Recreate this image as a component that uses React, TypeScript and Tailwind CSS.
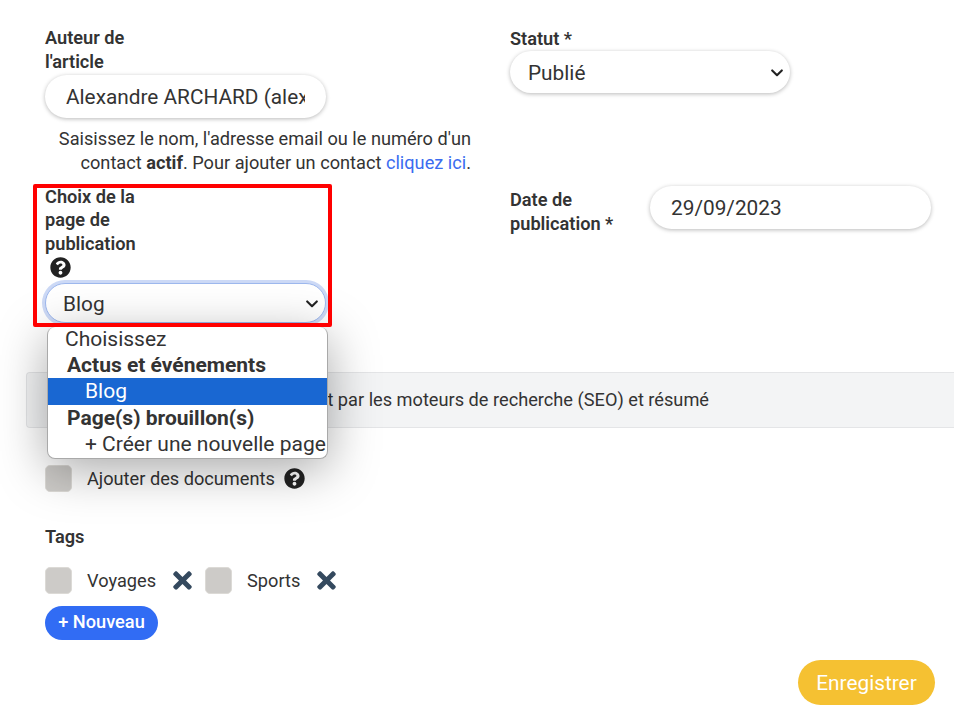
import { FaQuestionCircle, FaTimes } from "react-icons/fa";

function Check({ tone }: { tone: string }) {
  return <span className={`block w-[27px] h-[27px] rounded-[5px] border border-[#dcdad6] shrink-0 ${tone}`} />;
}

function Chevron({ right, top }: { right: string; top: string }) {
  return (
    <svg viewBox="0 0 12 8" className={`absolute w-[12px] h-[8px] pointer-events-none ${right} ${top}`} fill="none" stroke="#222" strokeWidth="2.1" strokeLinecap="round" strokeLinejoin="round">
      <path d="M1.2 1.4 6 6.2l4.8-4.8" />
    </svg>
  );
}

export default function App() {
  return (
    <div className="relative w-[954px] h-[715px] overflow-hidden bg-white text-[#333] font-['Roboto',sans-serif] text-[18.2px]">
      <div className="pt-[26px] grid grid-cols-[465px_1fr] pl-[45px]">
        <div>
          <label className="block w-[110px] font-semibold leading-[23.5px]">Auteur de l'article</label>
          <input
            readOnly
            value="Alexandre ARCHARD (alexandre.archard@example.com)"
            className="mt-[2px] block w-[281px] h-[43px] rounded-full bg-white px-[21px] text-[20.8px] text-[#333] outline-none shadow-[0_1px_4px_rgba(0,0,0,0.28)]"
          />
          <p className="mt-[9px] w-[426px] text-right leading-6">
            Saisissez le nom, l'adresse email ou le numéro d'un contact <b className="font-bold">actif</b>. Pour ajouter un contact <span className="text-[#3b6cf0]">cliquez ici</span>.
          </p>
        </div>
        <div>
          <label className="block font-semibold leading-6 pt-[1px]">Statut *</label>
          <div className="relative w-[280px]">
            <select className="block appearance-none w-[280px] h-[42px] rounded-full bg-white pl-[18px] pr-[30px] pt-[3px] text-[20.8px] text-[#333] outline-none shadow-[0_1px_4px_rgba(0,0,0,0.28)]">
              <option>Publié</option>
            </select>
            <Chevron right="right-[7px]" top="top-[18px]" />
          </div>
        </div>
      </div>

      <div className="mt-[11px] grid grid-cols-[465px_1fr] pl-[45px]">
        <div>
          <label className="block w-[110px] font-semibold leading-[23.3px] -mt-[1px]">Choix de la page de publication</label>
          <FaQuestionCircle className="ml-[5px] mt-[2px] text-[21px] text-[#222]" />
          <div className="relative w-[281px] mt-[5px]">
            <select className="block appearance-none w-[281px] h-[40px] rounded-full bg-white border border-[#9db8ee] pl-[17px] pr-[30px] pt-[3px] text-[20.8px] text-[#333] outline-none shadow-[0_0_0_3px_#ccd9f6]">
              <option>Blog</option>
            </select>
            <Chevron right="right-[8px]" top="top-[17px]" />
          </div>
        </div>
        <div className="flex gap-[30px]">
          <label className="block w-[110px] pt-[2px] font-semibold leading-6">Date de publication *</label>
          <input
            readOnly
            value="29/09/2023"
            className="block w-[281px] h-[43px] rounded-full bg-white px-[21px] text-[20.8px] text-[#333] outline-none shadow-[0_1px_4px_rgba(0,0,0,0.28)]"
          />
        </div>
      </div>

      <div className="mt-[49px] ml-[26px] h-[56px] flex items-center justify-end pr-[245px] rounded-l-[4px] bg-[#f3f4f5] border border-[#e4e5e7] border-r-0">
        Options de référencement par les moteurs de recherche (SEO) et résumé
      </div>

      <div className="mt-[37px] pl-[45px] flex items-center">
        <Check tone="bg-[#cdcbc8]" />
        <span className="ml-[15px]">Ajouter des documents</span>
        <FaQuestionCircle className="ml-[9px] text-[21px] text-[#222]" />
      </div>

      <div className="mt-[33px] pl-[45px] font-semibold leading-6">Tags</div>

      <div className="mt-[18px] pl-[45px] flex items-center">
        <Check tone="bg-[#cdcbc8]" />
        <span className="ml-[15px]">Voyages</span>
        <FaTimes className="ml-[13px] text-[#34495e] text-[27px]" />
        <span className="ml-[9px]"><Check tone="bg-[#cdcbc8]" /></span>
        <span className="ml-[15px]">Sports</span>
        <FaTimes className="ml-[13px] text-[#34495e] text-[27px]" />
      </div>

      <button className="ml-[45px] mt-[12px] block w-[113px] h-[34px] pb-[3px] rounded-full bg-[#316cf4] text-white font-medium">+ Nouveau</button>

      <div className="mt-[20px] flex justify-end pr-[19px]">
        <button className="w-[137px] h-[45px] pt-[2px] rounded-full bg-[#f5c132] text-white text-[20.8px] font-normal">Enregistrer</button>
      </div>

      {/* open select list */}
      <div className="absolute left-[47px] top-[327px] w-[281px] h-[132px] overflow-hidden rounded-[8px] bg-white border border-[#a9a9a9] border-t-0 text-[21px] leading-[26px] text-[#333] shadow-[0_10px_50px_rgba(0,0,0,0.35)]">
        <div className="pl-[17px] -mt-[1px]">Choisissez</div>
        <div className="pl-[19px] font-bold">Actus et événements</div>
        <div className="pl-[37px] h-[27px] bg-[#1967d2] text-white">Blog</div>
        <div className="pl-[19px] font-bold">Page(s) brouillon(s)</div>
        <div className="pl-[37px] whitespace-nowrap">+ Créer une nouvelle page</div>
      </div>

      {/* annotation */}
      <div className="absolute left-[33px] top-[184px] w-[299px] h-[143px] border-4 border-[#f00] rounded-[2px] pointer-events-none" />
    </div>
  );
}
